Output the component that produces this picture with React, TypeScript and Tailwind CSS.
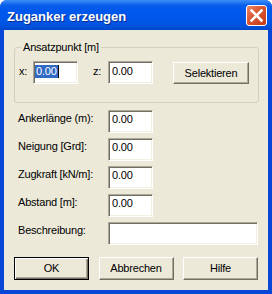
import type { ReactNode } from 'react';

const field =
  'h-[23px] bg-white border border-t-[#ACA899] border-l-[#ACA899] border-b-white border-r-white shadow-[inset_1px_1px_0_#716F64,inset_-1px_-1px_0_#F1EFE2] leading-[13px] whitespace-nowrap';

function Button({ label, primary = false, className = '' }: { label: string; primary?: boolean; className?: string }) {
  return (
    <button
      className={`bg-[#ECE9D8] text-[11px] leading-[13px] tracking-[-0.2px] text-black ${
        primary
          ? 'border border-black shadow-[inset_1px_1px_0_#fff,inset_-1px_-1px_0_#716F64,inset_-2px_-2px_0_#ACA899]'
          : 'border border-t-white border-l-white border-r-[#716F64] border-b-[#716F64] shadow-[inset_-1px_-1px_0_#ACA899]'
      } ${className}`}
    >
      {label}
    </button>
  );
}

function Row({ label, children }: { label: string; children: ReactNode }) {
  return (
    <div className="flex items-start">
      <span className="w-[90px] pt-[2px] leading-[13px]">{label}</span>
      {children}
    </div>
  );
}

export default function App() {
  return (
    <div className="w-[272px] h-[294px] flex flex-col rounded-t-[7px] overflow-hidden bg-[#0846D8] font-['Liberation_Sans',Arial,sans-serif] text-[11px] text-black">
      {/* Title bar */}
      <div className="h-[30px] flex items-start bg-[linear-gradient(to_bottom,#3D8FF8_0px,#2A7DF4_2px,#0A60EB_5px,#0058EE_10px,#0055E5_22px,#0050DA_27px,#0046C8_30px)]">
        <span className="pl-[7px] pt-[9px] text-[13px] leading-[15px] font-bold text-white [text-shadow:1px_1px_0_#0A2C8C]">
          Zuganker erzeugen
        </span>
        <div className="ml-auto mr-[5px] mt-[5px] w-[21px] h-[21px] rounded-[3px] border border-white bg-[linear-gradient(135deg,#EC8566_0%,#DB5432_45%,#C53A16_100%)] flex items-center justify-center">
          <svg width="13" height="13" viewBox="0 0 13 13">
            <path d="M1.5 1.5L11.5 11.5M11.5 1.5L1.5 11.5" stroke="#fff" strokeWidth="2.6" strokeLinecap="square" />
          </svg>
        </div>
      </div>

      {/* Client area */}
      <div className="flex-1 px-[4px] pb-[4px] flex">
        <div className="flex-1 bg-[#ECE9D8] flex flex-col tracking-[-0.2px]">
          <fieldset className="ml-[10px] mt-[11px] w-[245px] min-w-0 border border-[#D0D0BF] rounded-[3px] px-[4px] pt-[7px] pb-[18px]">
            <legend className="ml-[2px] px-[2px] leading-[13px]">Ansatzpunkt [m]</legend>
            <div className="flex items-start">
              <span className="w-[14px] pt-[4px] leading-[13px]">x:</span>
              <div className={`${field} w-[45px] pl-[1px] pt-[3px] flex items-start`}>
                <span className="inline-block h-[13px] px-[1px] bg-[#316AC5] text-white">0.00</span>
                <span className="inline-block w-px h-[13px] bg-black" />
              </div>
              <span className="ml-[15px] w-[15px] pt-[4px] leading-[13px]">z:</span>
              <div className={`${field} w-[45px] pl-[3px] pt-[3px]`}>0.00</div>
              <Button label="Selektieren" className="ml-[20px] mt-[1px] w-[76px] h-[22px]" />
            </div>
          </fieldset>

          <div className="mt-[7px] pl-[14px] flex flex-col gap-[5px]">
            <Row label="Ankerlänge (m):">
              <div className={`${field} w-[45px] pl-[3px] pt-[2px]`}>0.00</div>
            </Row>
            <Row label="Neigung [Grd]:">
              <div className={`${field} w-[45px] pl-[3px] pt-[2px]`}>0.00</div>
            </Row>
            <Row label="Zugkraft [kN/m]:">
              <div className={`${field} w-[45px] pl-[3px] pt-[2px]`}>0.00</div>
            </Row>
            <Row label="Abstand [m]:">
              <div className={`${field} w-[45px] pl-[3px] pt-[2px]`}>0.00</div>
            </Row>
            <Row label="Beschreibung:">
              <div className={`${field} w-[150px]`} />
            </Row>
          </div>

          <div className="mt-[12px] px-[10px] flex justify-between">
            <Button label="OK" primary className="w-[75px] h-[23px]" />
            <Button label="Abbrechen" className="w-[75px] h-[23px]" />
            <Button label="Hilfe" className="w-[75px] h-[23px]" />
          </div>
        </div>
      </div>
    </div>
  );
}
